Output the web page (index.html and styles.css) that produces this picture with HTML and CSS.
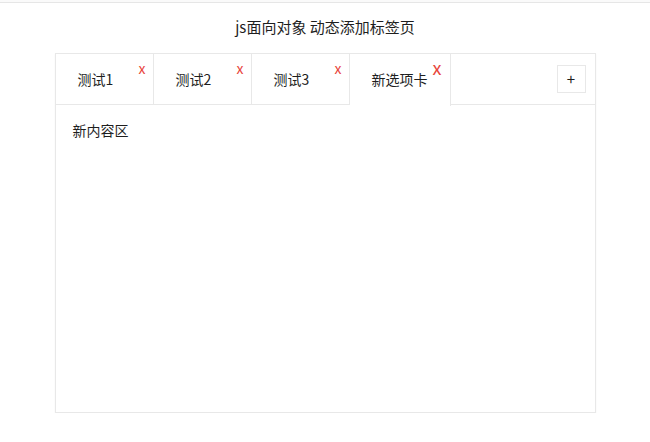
FILE: index.html
```html
<!DOCTYPE html>
<html lang="zh-CN">
<head>
    <meta charset="UTF-8">
    <meta name="viewport" content="width=device-width, initial-scale=1.0">
    <title>js面向对象 动态添加标签页</title>
    <link rel="stylesheet" href="styles.css">
</head>
<body>
    <div class="topline"></div>
    <h4 class="title">js面向对象 动态添加标签页</h4>
    <main class="tabsbox" id="tab">
        <nav class="firstnav">
            <ul>
                <li><span>测试1</span><span class="close">x</span></li>
                <li><span>测试2</span><span class="close">x</span></li>
                <li><span>测试3</span><span class="close">x</span></li>
                <li class="liactive"><span>新选项卡</span><span class="close big">x</span></li>
            </ul>
            <div class="tabadd"><span>+</span></div>
        </nav>
        <div class="tabscon">
            <section class="conactive">新内容区</section>
        </div>
    </main>
</body>
</html>
```

FILE: styles.css
```css
/* General Styles */
* {
    margin: 0;
    padding: 0;
    box-sizing: border-box;
}

body {
    font-family: "Noto Sans CJK SC", "Noto Sans", sans-serif;
    color: #1e1e1e;
    background-color: #fff;
}

ul li {
    list-style: none;
}

.topline {
    height: 3px;
    border-bottom: 1px solid #e6e6e6;
    background-color: #fafafa;
}

.title {
    font-size: 15px;
    font-weight: normal;
    line-height: 20px;
    text-align: center;
    margin: 14px 0 16px;
}

/* Tabs box */
.tabsbox {
    width: 541px;
    height: 360px;
    margin: 0 auto;
    border: 1px solid #e8e8e8;
    box-shadow: 0 1px 2px rgba(0, 0, 0, 0.04);
}

.firstnav {
    display: flex;
    justify-content: space-between;
    align-items: stretch;
    height: 51px;
    border-bottom: 1px solid #e8e8e8;
}

.firstnav ul {
    display: flex;
}

.firstnav li {
    position: relative;
    min-width: 98px;
    height: 51px;
    padding: 0 22px;
    line-height: 50px;
    font-size: 14px;
    border-right: 1px solid #e8e8e8;
    cursor: pointer;
}

.firstnav li.liactive {
    background-color: #fff;
    height: 52px;
    margin-bottom: -1px;
}

.firstnav li .close {
    position: absolute;
    top: 7px;
    right: 7px;
    font-size: 14px;
    line-height: 14px;
    color: #e8463c;
}

.firstnav li .close.big {
    top: 4px;
    right: 8px;
    font-size: 18px;
    line-height: 18px;
}

.tabadd {
    display: flex;
    align-items: center;
    padding-right: 9px;
}

.tabadd span {
    width: 29px;
    height: 28px;
    border: 1px solid #e8e8e8;
    text-align: center;
    line-height: 26px;
    font-size: 15px;
    cursor: pointer;
}

.tabscon section {
    padding: 15px 17px;
    font-size: 14px;
    line-height: 20px;
}
```
